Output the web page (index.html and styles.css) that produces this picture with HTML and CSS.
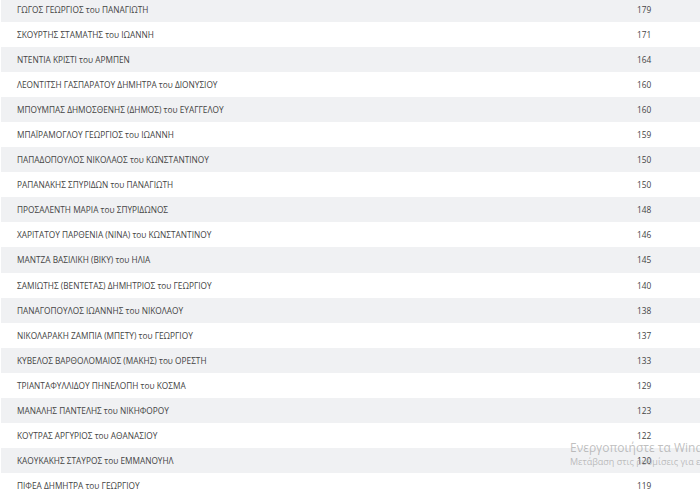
FILE: index.html
```html
<!DOCTYPE html>
<html lang="el">
  <head>
    <meta charset="UTF-8" />
    <meta name="viewport" content="width=device-width, initial-scale=1.0" />
    <title>Κατάταξη</title>
    <link rel="stylesheet" href="styles.css">
  </head>

  <body>
    <div class="results">
      <div class="row"><span class="name">ΓΩΓΟΣ ΓΕΩΡΓΙΟΣ του ΠΑΝΑΓΙΩΤΗ</span><span class="votes">179</span></div>
      <div class="row"><span class="name">ΣΚΟΥΡΤΗΣ ΣΤΑΜΑΤΗΣ του ΙΩΑΝΝΗ</span><span class="votes">171</span></div>
      <div class="row"><span class="name">ΝΤΕΝΤΙΑ ΚΡΙΣΤΙ του ΑΡΜΠΕΝ</span><span class="votes">164</span></div>
      <div class="row"><span class="name">ΛΕΟΝΤΙΤΣΗ ΓΑΣΠΑΡΑΤΟΥ ΔΗΜΗΤΡΑ του ΔΙΟΝΥΣΙΟΥ</span><span class="votes">160</span></div>
      <div class="row"><span class="name">ΜΠΟΥΜΠΑΣ ΔΗΜΟΣΘΕΝΗΣ (ΔΗΜΟΣ) του ΕΥΑΓΓΕΛΟΥ</span><span class="votes">160</span></div>
      <div class="row"><span class="name">ΜΠΑΪΡΑΜΟΓΛΟΥ ΓΕΩΡΓΙΟΣ του ΙΩΑΝΝΗ</span><span class="votes">159</span></div>
      <div class="row"><span class="name">ΠΑΠΑΔΟΠΟΥΛΟΣ ΝΙΚΟΛΑΟΣ του ΚΩΝΣΤΑΝΤΙΝΟΥ</span><span class="votes">150</span></div>
      <div class="row"><span class="name">ΡΑΠΑΝΑΚΗΣ ΣΠΥΡΙΔΩΝ του ΠΑΝΑΓΙΩΤΗ</span><span class="votes">150</span></div>
      <div class="row"><span class="name">ΠΡΟΣΑΛΕΝΤΗ ΜΑΡΙΑ του ΣΠΥΡΙΔΩΝΟΣ</span><span class="votes">148</span></div>
      <div class="row"><span class="name">ΧΑΡΙΤΑΤΟΥ ΠΑΡΘΕΝΙΑ (ΝΙΝΑ) του ΚΩΝΣΤΑΝΤΙΝΟΥ</span><span class="votes">146</span></div>
      <div class="row"><span class="name">ΜΑΝΤΖΑ ΒΑΣΙΛΙΚΗ (ΒΙΚΥ) του ΗΛΙΑ</span><span class="votes">145</span></div>
      <div class="row"><span class="name">ΣΑΜΙΩΤΗΣ (ΒΕΝΤΕΤΑΣ) ΔΗΜΗΤΡΙΟΣ του ΓΕΩΡΓΙΟΥ</span><span class="votes">140</span></div>
      <div class="row"><span class="name">ΠΑΝΑΓΟΠΟΥΛΟΣ ΙΩΑΝΝΗΣ του ΝΙΚΟΛΑΟΥ</span><span class="votes">138</span></div>
      <div class="row"><span class="name">ΝΙΚΟΛΑΡΑΚΗ ΖΑΜΠΙΑ (ΜΠΕΤΥ) του ΓΕΩΡΓΙΟΥ</span><span class="votes">137</span></div>
      <div class="row"><span class="name">ΚΥΒΕΛΟΣ ΒΑΡΘΟΛΟΜΑΙΟΣ (ΜΑΚΗΣ) του ΟΡΕΣΤΗ</span><span class="votes">133</span></div>
      <div class="row"><span class="name">ΤΡΙΑΝΤΑΦΥΛΛΙΔΟΥ ΠΗΝΕΛΟΠΗ του ΚΟΣΜΑ</span><span class="votes">129</span></div>
      <div class="row"><span class="name">ΜΑΝΑΛΗΣ ΠΑΝΤΕΛΗΣ του ΝΙΚΗΦΟΡΟΥ</span><span class="votes">123</span></div>
      <div class="row"><span class="name">ΚΟΥΤΡΑΣ ΑΡΓΥΡΙΟΣ του ΑΘΑΝΑΣΙΟΥ</span><span class="votes">122</span></div>
      <div class="row"><span class="name">ΚΑΟΥΚΑΚΗΣ ΣΤΑΥΡΟΣ του ΕΜΜΑΝΟΥΗΛ</span><span class="votes">120</span></div>
      <div class="row"><span class="name">ΠΙΦΕΑ ΔΗΜΗΤΡΑ του ΓΕΩΡΓΙΟΥ</span><span class="votes">119</span></div>
    </div>

    <div class="activate">
      <div class="activate-title">Ενεργοποιήστε τα Windows</div>
      <div class="activate-sub">Μετάβαση στις ρυθμίσεις για ενεργοποίηση των Windows.</div>
    </div>
  </body>
</html>
```

FILE: styles.css
```css
html, body {
  margin: 0;
  overflow: hidden;
  background: #fff;
}

body {
  font-family: "Open Sans", "Noto Sans", sans-serif;
  font-size: 8.3px;
  color: #444;
}

.results {
  margin-top: -3px;
  margin-left: 1px;
}

.row {
  display: grid;
  grid-template-columns: 620px auto;
  align-items: center;
  height: 25.05px;
  padding-left: 16px;
}

.row:nth-child(odd) {
  background-color: #f0f1f3;
}

.activate {
  position: absolute;
  left: 570px;
  top: 440px;
  color: rgba(150, 150, 150, 0.6);
  white-space: nowrap;
  font-family: "Open Sans", sans-serif;
}

.activate-title {
  font-size: 12px;
  line-height: 15px;
}

.activate-sub {
  font-size: 9px;
  line-height: 13px;
}
```
